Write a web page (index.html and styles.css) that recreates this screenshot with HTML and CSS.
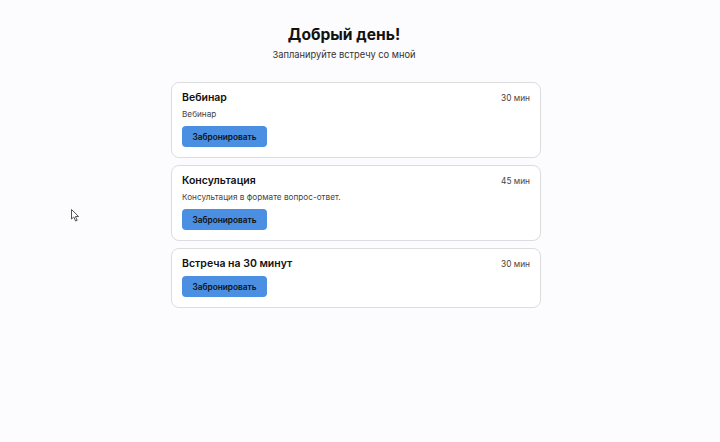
FILE: index.html
```html
<!DOCTYPE html>
<html lang="ru">
<head>
    <meta charset="UTF-8">
    <meta name="viewport" content="width=device-width, initial-scale=1.0">
    <title>Запись на встречу</title>
    <link rel="stylesheet" href="styles.css">
</head>
<body>
    <div class="page">
        <header class="intro">
            <h1>Добрый день!</h1>
            <p>Запланируйте встречу со мной</p>
        </header>

        <main class="events">
            <!-- Вебинар -->
            <section class="event">
                <div class="event-head">
                    <h2>Вебинар</h2>
                    <span class="duration">30 мин</span>
                </div>
                <p class="event-desc">Вебинар</p>
                <button type="button">Забронировать</button>
            </section>

            <!-- Консультация -->
            <section class="event">
                <div class="event-head">
                    <h2>Консультация</h2>
                    <span class="duration">45 мин</span>
                </div>
                <p class="event-desc">Консультация в формате вопрос-ответ.</p>
                <button type="button">Забронировать</button>
            </section>

            <!-- Встреча без описания -->
            <section class="event">
                <div class="event-head">
                    <h2>Встреча на 30 минут</h2>
                    <span class="duration">30 мин</span>
                </div>
                <button type="button">Забронировать</button>
            </section>
        </main>
    </div>

    <svg class="cursor" width="10" height="13" viewBox="0 0 10 13">
        <path d="M0.5 0.5 L0.5 10 L2.8 8 L4.6 12 L6.2 11.3 L4.4 7.5 L7.6 7.5 Z" fill="#fff" stroke="#555" stroke-width="1"/>
    </svg>
</body>
</html>
```

FILE: styles.css
```css
body {
    font-family: Inter, "Noto Sans", sans-serif;
    margin: 0;
    padding: 0;
    background-color: #fcfbfd;
    color: #111;
}

.page {
    width: 370px;
    margin-left: 171px;
    padding-top: 23px;
}

.intro {
    width: 346px;
    text-align: center;
    margin-bottom: 19px;
}

.intro h1 {
    margin: 0;
    font-size: 15.6px;
    line-height: 24px;
    font-weight: 700;
}

.intro p {
    margin: 0;
    font-size: 9.3px;
    line-height: 16px;
    color: #333;
}

.events {
    display: flex;
    flex-direction: column;
    gap: 7px;
}

.event {
    background-color: #fff;
    border: 1px solid #dcdcdf;
    border-radius: 8px;
    padding: 7px 10px 10px;
}

.event-head {
    display: flex;
    justify-content: space-between;
    align-items: center;
}

.event-head h2 {
    margin: 0;
    font-size: 10.5px;
    line-height: 16px;
    font-weight: 600;
}

.duration {
    font-size: 8.3px;
    color: #444;
}

.event-desc {
    margin: 1px 0 1px;
    font-size: 8.2px;
    line-height: 14px;
    color: #444;
}

button {
    margin-top: 4px;
    width: 85px;
    height: 21px;
    padding: 0;
    background-color: #4a8fe2;
    color: #111;
    border: none;
    border-radius: 4px;
    font-family: inherit;
    font-size: 8.3px;
    font-weight: 600;
    cursor: pointer;
}

button:hover {
    background-color: #3b7fd0;
}

.cursor {
    position: absolute;
    left: 71px;
    top: 209px;
}
```
